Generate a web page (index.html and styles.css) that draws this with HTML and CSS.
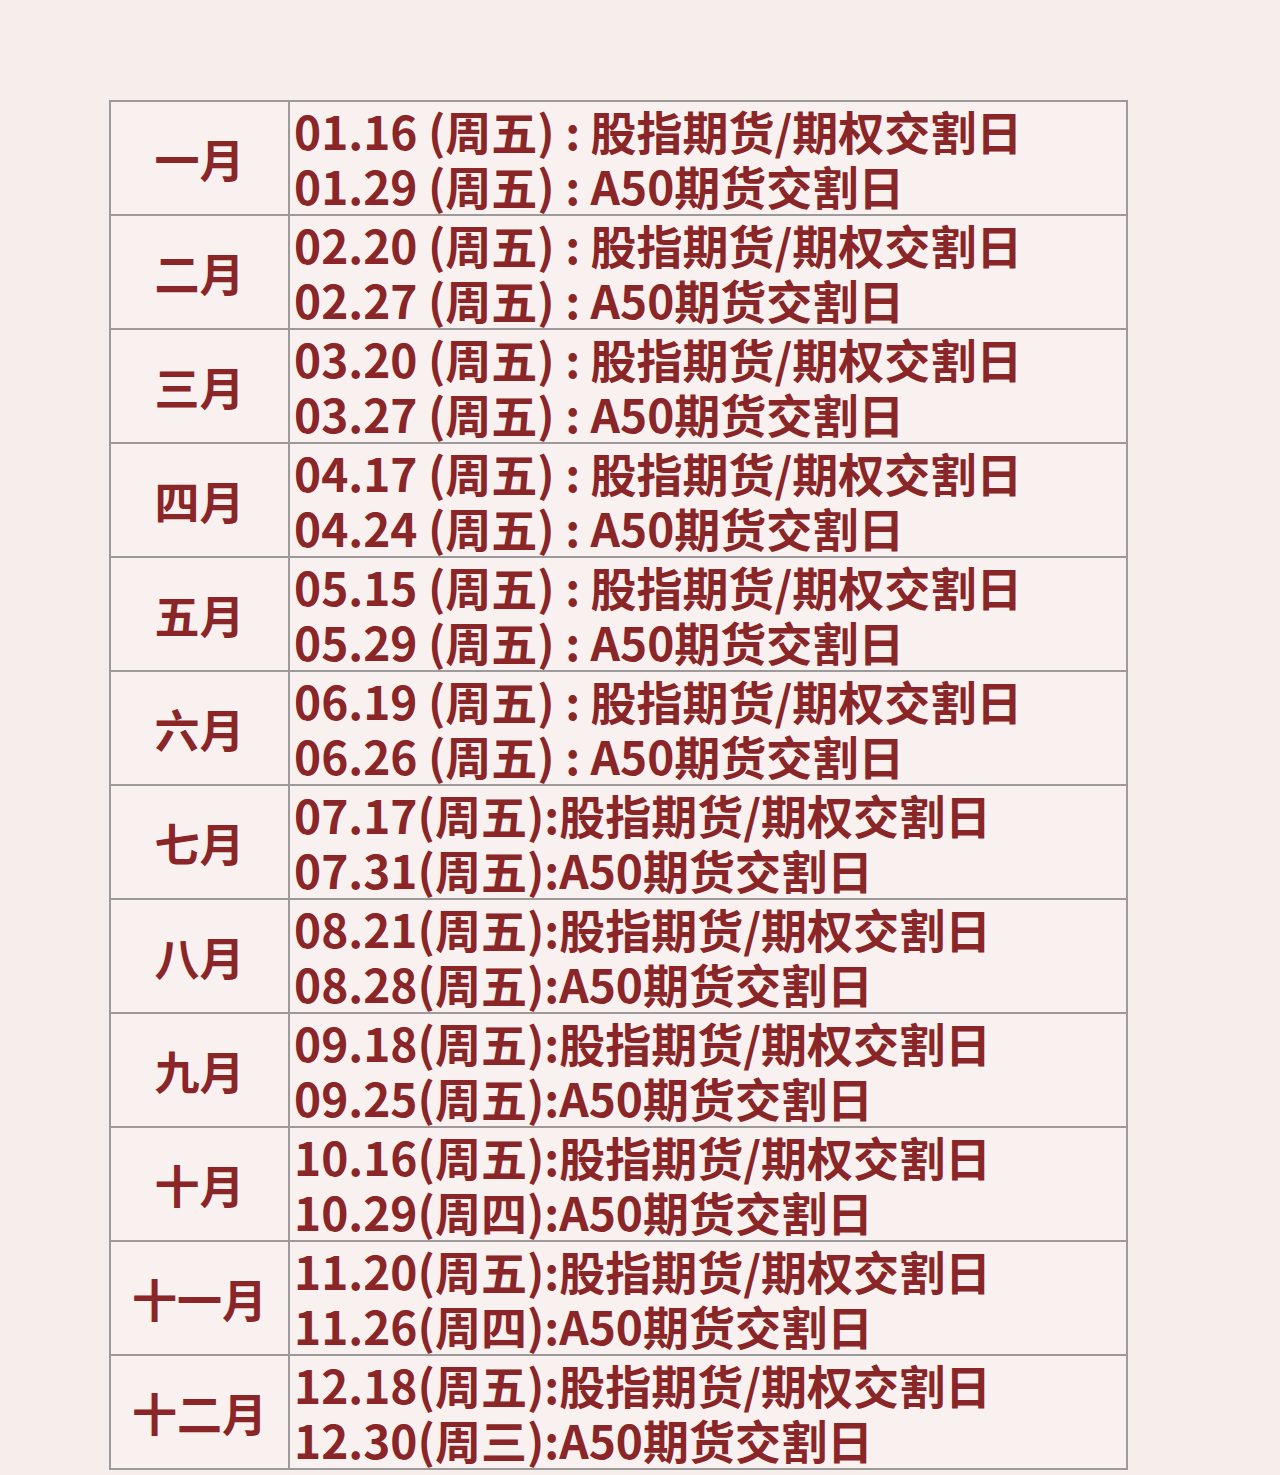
FILE: index.html
```html
<!DOCTYPE html>
<html lang="zh-CN">
<head>
<meta charset="utf-8">
<title>交割日</title>
<link rel="stylesheet" href="styles.css">
</head>
<body>
<table class="cal">
<tbody>
<tr><td class="m">一月</td><td class="d"><div>01.16 (周五) : 股指期货/期权交割日</div><div>01.29 (周五) : A50期货交割日</div></td></tr>
<tr><td class="m">二月</td><td class="d"><div>02.20 (周五) : 股指期货/期权交割日</div><div>02.27 (周五) : A50期货交割日</div></td></tr>
<tr><td class="m">三月</td><td class="d"><div>03.20 (周五) : 股指期货/期权交割日</div><div>03.27 (周五) : A50期货交割日</div></td></tr>
<tr><td class="m">四月</td><td class="d"><div>04.17 (周五) : 股指期货/期权交割日</div><div>04.24 (周五) : A50期货交割日</div></td></tr>
<tr><td class="m">五月</td><td class="d"><div>05.15 (周五) : 股指期货/期权交割日</div><div>05.29 (周五) : A50期货交割日</div></td></tr>
<tr><td class="m">六月</td><td class="d"><div>06.19 (周五) : 股指期货/期权交割日</div><div>06.26 (周五) : A50期货交割日</div></td></tr>
<tr><td class="m">七月</td><td class="d"><div>07.17(周五):股指期货/期权交割日</div><div>07.31(周五):A50期货交割日</div></td></tr>
<tr><td class="m">八月</td><td class="d"><div>08.21(周五):股指期货/期权交割日</div><div>08.28(周五):A50期货交割日</div></td></tr>
<tr><td class="m">九月</td><td class="d"><div>09.18(周五):股指期货/期权交割日</div><div>09.25(周五):A50期货交割日</div></td></tr>
<tr><td class="m">十月</td><td class="d"><div>10.16(周五):股指期货/期权交割日</div><div>10.29(周四):A50期货交割日</div></td></tr>
<tr><td class="m">十一月</td><td class="d"><div>11.20(周五):股指期货/期权交割日</div><div>11.26(周四):A50期货交割日</div></td></tr>
<tr><td class="m">十二月</td><td class="d"><div>12.18(周五):股指期货/期权交割日</div><div>12.30(周三):A50期货交割日</div></td></tr>
</tbody>
</table>
</body>
</html>
```
FILE: styles.css
```css
html, body {
  margin: 0;
  padding: 0;
  background: #f5eeeb;
}
body {
  padding: 100px 0 0 109px;
  height: 1375px;
  font-family: "Noto Sans CJK SC", "Noto Sans", sans-serif;
  color: #8a2628;
  font-weight: 700;
}
.cal {
  border-collapse: collapse;
  width: 1019px;
  background: #f8f1ef;
}
.cal td {
  border: 2px solid #9c9a9a;
  padding: 0;
  height: 112px;
}
.m {
  width: 177px;
  text-align: center;
  font-size: 45px;
  line-height: 1;
  padding-top: 4px;
}
.d {
  padding-left: 4px !important;
  font-size: 46px;
  line-height: 55px;
  vertical-align: middle;
}
.d div {
  white-space: nowrap;
}
```
